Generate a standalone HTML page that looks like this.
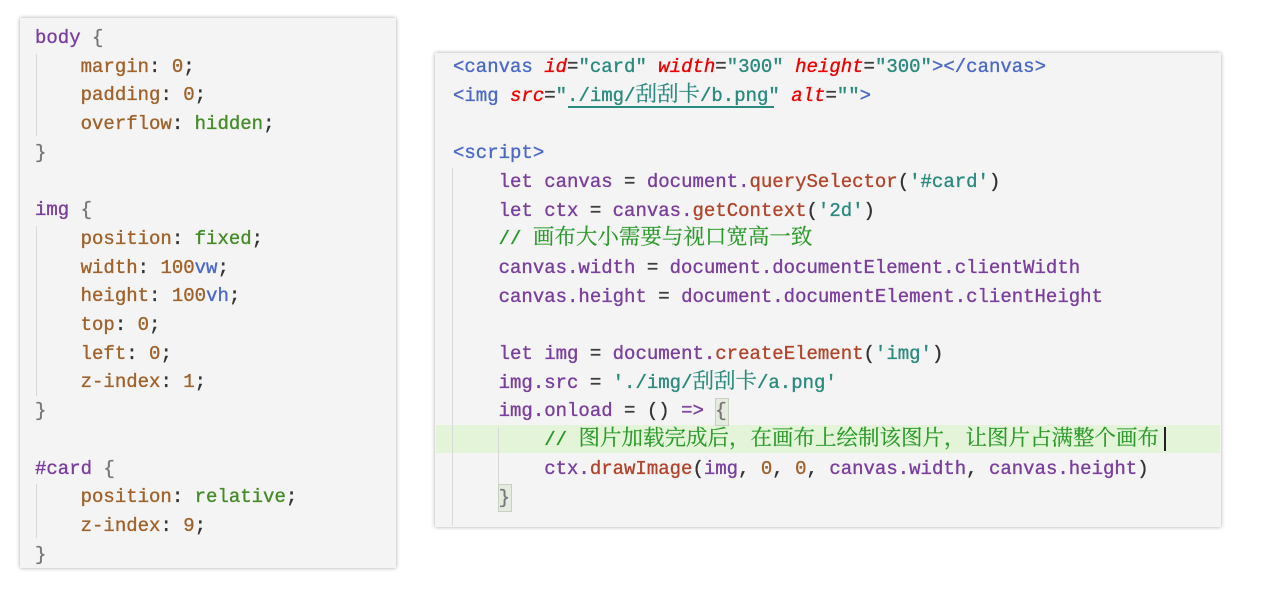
<!DOCTYPE html>
<html><head><meta charset="utf-8"><style>
body{margin:0;width:1266px;height:589px;background:#fff;position:relative;overflow:hidden;font-family:"Liberation Mono","Noto Sans CJK SC",monospace;font-size:19px;-webkit-text-stroke:0.35px}
.p{position:absolute;background:#f4f4f4;box-shadow:0 0 4px rgba(0,0,0,.35)}
.l{position:absolute;white-space:pre;line-height:28.7px;height:28.7px}
.k{color:#7a3e9d}.pr{color:#a0622a}.g{color:#448c27}.u{color:#4b69c6}.b{color:#777}
.t{color:#4b69c6}.a{color:#e00;font-style:italic}.s{color:#2a8a7e}.m{color:#b1452b}.n{color:#a0622a}.d{color:#333}
.c{color:#2a9a2a;font-family:"Liberation Mono","Noto Serif CJK SC",serif}
.cj{font-family:"Noto Serif CJK SC",serif;font-size:21.5px;line-height:1;-webkit-text-stroke:0.2px}
.guide{position:absolute;width:1px;background:#d8d8d8}
</style></head><body>
<div class="p" style="left:20px;top:18px;width:376px;height:550px"></div>
<div class="guide" style="left:36px;top:54px;height:82px"></div>
<div class="guide" style="left:36px;top:226px;height:170px"></div>
<div class="guide" style="left:36px;top:484px;height:54px"></div>
<div style="position:absolute;left:35px;top:24px">
<div class="l" style="top:0"><span class="k">body</span> <span class="b">{</span></div>
<div class="l" style="top:28.7px">    <span class="pr">margin</span><span class="d">:</span> <span class="pr">0</span><span class="d">;</span></div>
<div class="l" style="top:57.4px">    <span class="pr">padding</span><span class="d">:</span> <span class="pr">0</span><span class="d">;</span></div>
<div class="l" style="top:86.1px">    <span class="pr">overflow</span><span class="d">:</span> <span class="g">hidden</span><span class="d">;</span></div>
<div class="l" style="top:114.8px"><span class="b">}</span></div>
<div class="l" style="top:172.2px"><span class="k">img</span> <span class="b">{</span></div>
<div class="l" style="top:200.9px">    <span class="pr">position</span><span class="d">:</span> <span class="g">fixed</span><span class="d">;</span></div>
<div class="l" style="top:229.6px">    <span class="pr">width</span><span class="d">:</span> <span class="pr">100</span><span class="u">vw</span><span class="d">;</span></div>
<div class="l" style="top:258.3px">    <span class="pr">height</span><span class="d">:</span> <span class="pr">100</span><span class="u">vh</span><span class="d">;</span></div>
<div class="l" style="top:287px">    <span class="pr">top</span><span class="d">:</span> <span class="pr">0</span><span class="d">;</span></div>
<div class="l" style="top:315.7px">    <span class="pr">left</span><span class="d">:</span> <span class="pr">0</span><span class="d">;</span></div>
<div class="l" style="top:344.4px">    <span class="pr">z-index</span><span class="d">:</span> <span class="pr">1</span><span class="d">;</span></div>
<div class="l" style="top:373.1px"><span class="b">}</span></div>
<div class="l" style="top:430.5px"><span class="k">#card</span> <span class="b">{</span></div>
<div class="l" style="top:459.2px">    <span class="pr">position</span><span class="d">:</span> <span class="g">relative</span><span class="d">;</span></div>
<div class="l" style="top:487.9px">    <span class="pr">z-index</span><span class="d">:</span> <span class="pr">9</span><span class="d">;</span></div>
<div class="l" style="top:516.6px"><span class="b">}</span></div>
</div>

<div class="p" style="left:435px;top:53px;width:786px;height:474px"></div>
<div style="position:absolute;left:436px;top:425px;width:784px;height:28px;background:#e4f4d8"></div>
<div class="guide" style="left:452px;top:168px;height:358px"></div>
<div class="guide" style="left:498px;top:427px;height:58px"></div>
<div style="position:absolute;left:715px;top:398px;width:12px;height:26px;border:1px solid #c8d0c0;background:#e6ebe0"></div>
<div style="position:absolute;left:498px;top:484px;width:12px;height:26px;border:1px solid #c8d0c0;background:#e6ebe0"></div>
<div style="position:absolute;left:1164px;top:427px;width:2px;height:24px;background:#222"></div>
<div style="position:absolute;left:568px;top:106px;width:206px;height:2px;background:#2a8a7e"></div>
<div style="position:absolute;left:453px;top:53px">
<div class="l" style="top:0"><span class="t">&lt;canvas</span> <span class="a">id</span><span class="d">=</span><span class="s">"card"</span> <span class="a">width</span><span class="d">=</span><span class="s">"300"</span> <span class="a">height</span><span class="d">=</span><span class="s">"300"</span><span class="t">&gt;&lt;/canvas&gt;</span></div>
<div class="l" style="top:28.7px"><span class="t">&lt;img</span> <span class="a">src</span><span class="d">=</span><span class="s">"./img/<span class="cj">刮刮卡</span>/b.png"</span> <span class="a">alt</span><span class="d">=</span><span class="s">""</span><span class="t">&gt;</span></div>
<div class="l" style="top:86.1px"><span class="t">&lt;script&gt;</span></div>
<div class="l" style="top:114.8px">    <span class="k">let canvas</span> <span class="d">=</span> <span class="k">document.</span><span class="m">querySelector</span><span class="d">(</span><span class="s">'#card'</span><span class="d">)</span></div>
<div class="l" style="top:143.5px">    <span class="k">let ctx</span> <span class="d">=</span> <span class="k">canvas.</span><span class="m">getContext</span><span class="d">(</span><span class="s">'2d'</span><span class="d">)</span></div>
<div class="l" style="top:172.2px">    <span class="c">// <span class="cj">画布大小需要与视口宽高一致</span></span></div>
<div class="l" style="top:200.9px">    <span class="k">canvas.width</span> <span class="d">=</span> <span class="k">document.documentElement.clientWidth</span></div>
<div class="l" style="top:229.6px">    <span class="k">canvas.height</span> <span class="d">=</span> <span class="k">document.documentElement.clientHeight</span></div>
<div class="l" style="top:287px">    <span class="k">let img</span> <span class="d">=</span> <span class="k">document.</span><span class="m">createElement</span><span class="d">(</span><span class="s">'img'</span><span class="d">)</span></div>
<div class="l" style="top:315.7px">    <span class="k">img.src</span> <span class="d">=</span> <span class="s">'./img/<span class="cj">刮刮卡</span>/a.png'</span></div>
<div class="l" style="top:344.4px">    <span class="k">img.onload</span> <span class="d">=</span> <span class="d">()</span> <span class="k">=&gt;</span> <span class="b">{</span></div>
<div class="l" style="top:373.1px">        <span class="c">// <span class="cj">图片加载完成后，在画布上绘制该图片，让图片占满整个画布</span></span></div>
<div class="l" style="top:401.8px">        <span class="k">ctx.</span><span class="m">drawImage</span><span class="d">(</span><span class="k">img</span><span class="d">,</span> <span class="n">0</span><span class="d">,</span> <span class="n">0</span><span class="d">,</span> <span class="k">canvas.width</span><span class="d">,</span> <span class="k">canvas.height</span><span class="d">)</span></div>
<div class="l" style="top:430.5px">    <span class="b">}</span></div>
</div>
</body></html>
